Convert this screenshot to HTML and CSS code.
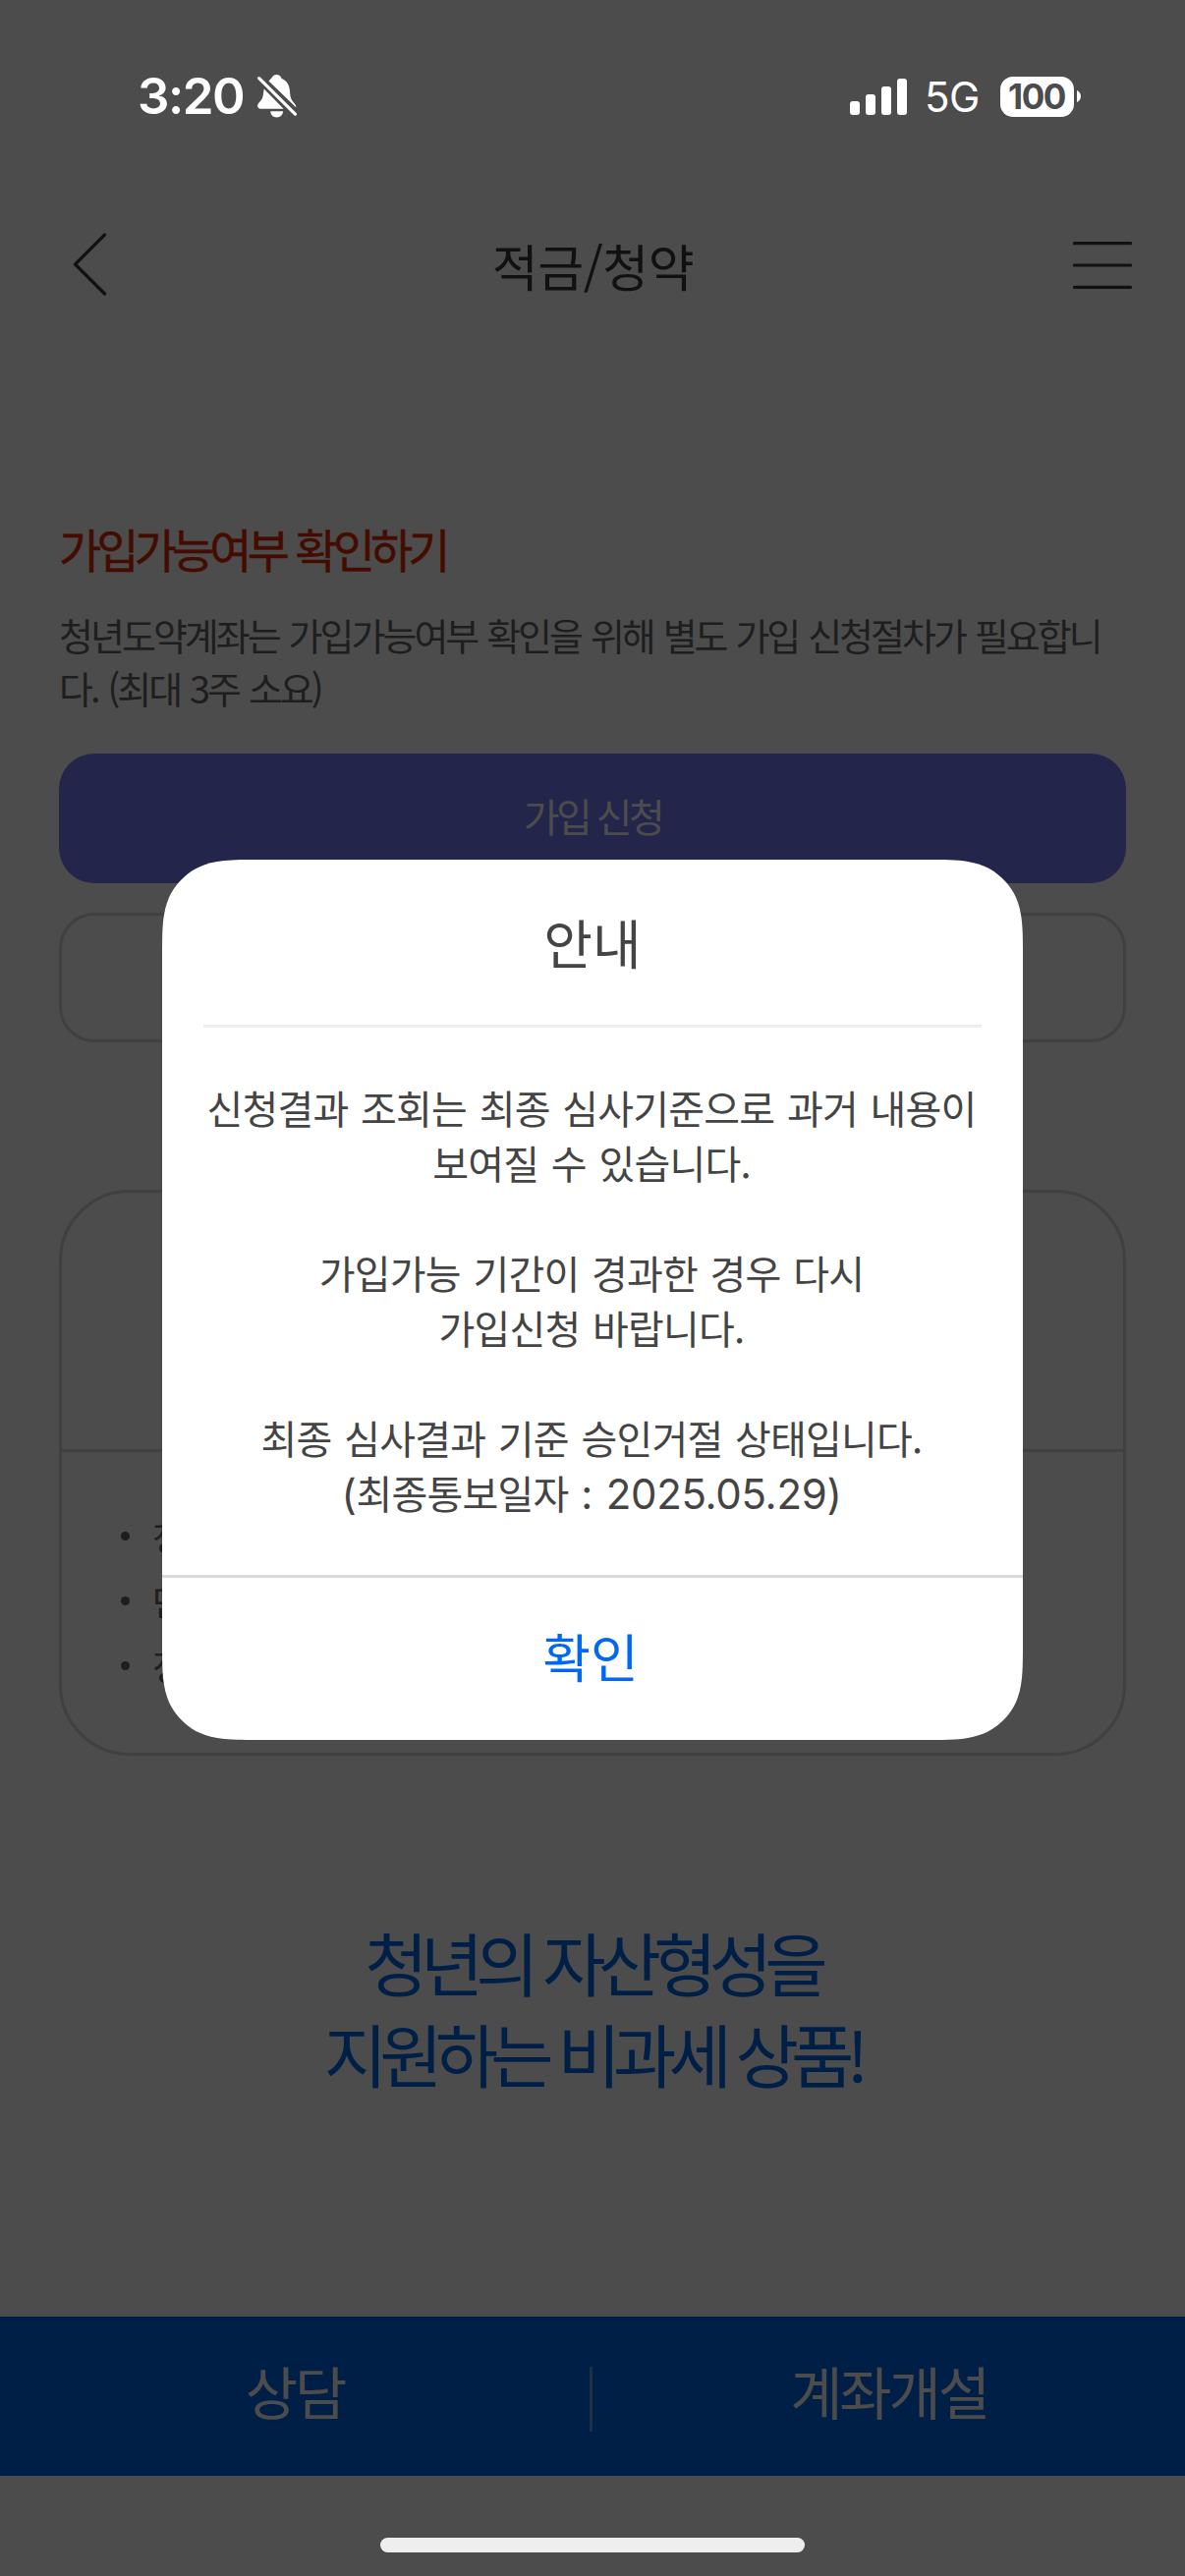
FILE: index.html
```html
<!DOCTYPE html>
<html lang="ko">
<head>
  <meta charset="UTF-8" />
  <title>적금/청약</title>
  <link rel="stylesheet" href="styles.css">
</head>
<body>

  <div class="status-bar">
    <div class="status-left">
      <span class="time">3:20</span>
      <svg class="bell" width="40" height="44" viewBox="0 0 40 44" fill="#fff">
        <path d="M11.5 6.5C12.6 5 13.8 4.3 14.3 3.5C15.3 1.2 17 0 19.5 0C22 0 23.8 1.4 24.7 3.9C30.5 6.3 32.6 11 33 17C33.3 22.5 34 25 37 28.4C38.6 30.2 39.5 31.4 39.2 33.2Z"/>
        <path d="M6.7 14.6L26.6 34.8H3.3C0.5 34.8-.7 32.2.7 29.8C1.6 28.3 3.8 26.5 4.9 24C6.1 21.2 6.1 18 6.7 14.6Z"/>
        <path d="M13.3 37.2H26C26 40.8 23.2 43.4 19.6 43.4C16 43.4 13.3 40.8 13.3 37.2Z"/>
        <path d="M1.7 3.7L38.4 40.2" stroke="#fff" stroke-width="3.2" stroke-linecap="round"/>
      </svg>
    </div>
    <div class="status-right">
      <svg class="signal" width="58" height="37" viewBox="0 0 58 37" fill="#fff">
        <rect x="0" y="23" width="10" height="14" rx="3"/>
        <rect x="16" y="16" width="10" height="21" rx="3"/>
        <rect x="32" y="8" width="10" height="29" rx="3"/>
        <rect x="48" y="0" width="10" height="37" rx="3"/>
      </svg>
      <span class="network">5G</span>
      <span class="battery">100</span>
      <svg class="battery-tip" width="4" height="12" viewBox="0 0 4 12" fill="#fff"><path d="M0 0C5.3 2 5.3 10 0 12Z"/></svg>
    </div>
  </div>

  <header class="header">
    <svg width="36" height="66" viewBox="0 0 36 66" fill="none" stroke="#111" stroke-width="3.2" stroke-linecap="round" stroke-linejoin="round">
      <path d="M32.5 2L2.5 32L32.5 62"/>
    </svg>
    <h1 class="title">적금/청약</h1>
    <svg width="60" height="48" viewBox="0 0 60 48" fill="none" stroke="#111" stroke-width="3.2" stroke-linecap="round">
      <path d="M1.5 1.7H58.5M1.5 24H58.5M1.5 46.3H58.5"/>
    </svg>
  </header>

  <main class="content">
    <h2 class="check-title">가입가능여부 확인하기</h2>
    <p class="check-desc">청년도약계좌는 가입가능여부 확인을 위해 별도 가입 신청절차가 필요합니<br>다. (최대 3주 소요)</p>
    <div class="btn btn-apply">가입 신청</div>
    <div class="btn btn-result"></div>

    <div class="card">
      <div class="card-head"></div>
      <ul class="card-list">
        <li>청</li>
        <li>만</li>
        <li>정</li>
      </ul>
    </div>

    <p class="slogan">청년의 자산형성을<br>지원하는 비과세 상품!</p>
  </main>

  <nav class="bottom-bar">
    <div class="tab tab-left">상담</div>
    <div class="bar-line"></div>
    <div class="tab">계좌개설</div>
  </nav>
  <div class="home-area">
    <div class="home-indicator"></div>
  </div>

  <!-- 안내 팝업 -->
  <div class="modal">
    <h3 class="modal-title">안내</h3>
    <div class="modal-body">
      <p>신청결과 조회는 최종 심사기준으로 과거 내용이<br>보여질 수 있습니다.</p>
      <p>가입가능 기간이 경과한 경우 다시<br>가입신청 바랍니다.</p>
      <p>최종 심사결과 기준 승인거절 상태입니다.<br><span class="num">(</span>최종통보일자 <span class="num">: 2025.05.29)</span></p>
    </div>
    <div class="modal-btn">확인</div>
  </div>

</body>
</html>
```

FILE: styles.css
```css
* {
  box-sizing: border-box;
  margin: 0;
  padding: 0;
}
body {
  position: relative;
  width: 1206px;
  height: 2622px;
  overflow: hidden;
  display: flex;
  flex-direction: column;
  background-color: #4c4c4c;
  font-family: "Noto Sans CJK KR", sans-serif;
}
h1, h2, h3 {
  font-weight: 400;
}

/* status bar */
.status-bar {
  height: 196px;
  padding: 0 106px 0 140px;
  display: flex;
  justify-content: space-between;
  align-items: center;
  font-family: "Inter", sans-serif;
  color: #fff;
}
.status-left,
.status-right {
  display: flex;
  align-items: center;
}
.time {
  font-size: 51px;
  font-weight: 600;
  line-height: 60px;
  letter-spacing: -1.5px;
  width: 122px;
  white-space: nowrap;
}
.network {
  font-size: 42px;
  line-height: 50px;
  letter-spacing: -0.5px;
  width: 57px;
  margin: 2px 20px 0 18px;
}
.battery {
  width: 75px;
  height: 41px;
  border-radius: 13px;
  background-color: #fff;
  color: #4c4c4c;
  font-size: 35px;
  font-weight: 700;
  line-height: 41px;
  letter-spacing: -1.5px;
  padding-right: 1px;
  text-align: center;
}
.battery-tip {
  margin-left: 3px;
}

/* header */
.header {
  height: 148px;
  padding: 0 54px 0 74px;
  display: flex;
  justify-content: space-between;
  align-items: center;
}
.title {
  padding-left: 5px;
  font-size: 51px;
  line-height: 72px;
  letter-spacing: -0.4px;
  color: #111;
}

/* content */
.content {
  flex: 1;
  padding: 184px 60px 0;
}
.check-title {
  font-size: 47px;
  line-height: 60px;
  letter-spacing: -4.9px;
  word-spacing: 2px;
  -webkit-text-stroke: 0.5px #440c00;
  color: #440c00;
}
.check-desc {
  margin-top: 31px;
  font-size: 38px;
  line-height: 54px;
  letter-spacing: -3px;
  word-spacing: 2.2px;
  color: #1e1e1e;
  white-space: nowrap;
}
.btn {
  height: 132px;
  border-radius: 36px;
  font-size: 40px;
  line-height: 127px;
  letter-spacing: -3.6px;
  text-align: center;
}
.btn-apply {
  margin-top: 40px;
  background-color: #24254b;
  color: #4c4c4c;
}
.btn-result {
  margin-top: 30px;
  border: 3px solid #404040;
}
.card {
  margin-top: 150px;
  height: 576px;
  border: 3px solid #404040;
  border-radius: 72px;
}
.card-head {
  height: 264px;
  border-bottom: 3px solid #404040;
}
.card-list {
  list-style: none;
  padding: 52px 0 0 60px;
}
.card-list li {
  display: flex;
  align-items: center;
  font-size: 36px;
  line-height: 66px;
  color: #1e1e1e;
}
.card-list li::before {
  content: "";
  width: 9px;
  height: 9px;
  margin-right: 23px;
  border-radius: 50%;
  background-color: #1e1e1e;
}
.slogan {
  margin-top: 163px;
  font-size: 70px;
  line-height: 93px;
  letter-spacing: -7.9px;
  text-align: center;
  color: #001f47;
}

/* bottom bar */
.bottom-bar {
  height: 162px;
  display: flex;
  align-items: center;
  background-color: #001f47;
}
.tab {
  flex: 1;
  padding-bottom: 13px;
  font-size: 58px;
  line-height: 84px;
  letter-spacing: -3.2px;
  text-align: center;
  color: #4c4c4c;
}
.tab-left {
  flex: 0 0 600px;
}
.bar-line {
  width: 3px;
  height: 66px;
  margin-top: 6px;
  background-color: #1e3048;
}
.home-area {
  height: 102px;
  padding-top: 63px;
}
.home-indicator {
  width: 432px;
  height: 15px;
  margin: 0 auto;
  border-radius: 8px;
  background-color: #eee;
}

/* popup */
.modal {
  position: absolute;
  left: 165px;
  top: 875px;
  width: 876px;
  height: 896px;
  background-color: #fff;
  color: #444;
  text-align: center;
  clip-path: path("M0 104C0 80 0 68 2 56C5 38 12 28 20 20C28 12 38 5 56 2C68 0 80 0 104 0H772C796 0 808 0 820 2C838 5 848 12 856 20C864 28 871 38 874 56C876 68 876 80 876 104V792C876 816 876 828 874 840C871 858 864 868 856 876C848 884 838 891 820 894C808 896 796 896 772 896H104C80 896 68 896 56 894C38 891 28 884 20 876C12 868 5 858 2 840C0 828 0 816 0 792Z");
}
.modal-title {
  height: 171px;
  margin: 0 42px;
  border-bottom: 3px solid #eee;
  font-size: 54px;
  line-height: 167px;
}
.modal-body {
  height: 557px;
  padding: 53px 2px 0 0;
  font-size: 40px;
  line-height: 56px;
  letter-spacing: -0.8px;
  word-spacing: 2.2px;
  white-space: nowrap;
}
.modal-body p {
  margin-bottom: 56px;
}
.num {
  font-family: "Inter", sans-serif;
  font-size: 42px;
  line-height: 1;
  letter-spacing: -0.3px;
}
.modal-btn {
  height: 168px;
  padding-right: 4px;
  border-top: 3px solid #d9d9d9;
  font-size: 53px;
  line-height: 159px;
  color: #0068f5;
}
```
